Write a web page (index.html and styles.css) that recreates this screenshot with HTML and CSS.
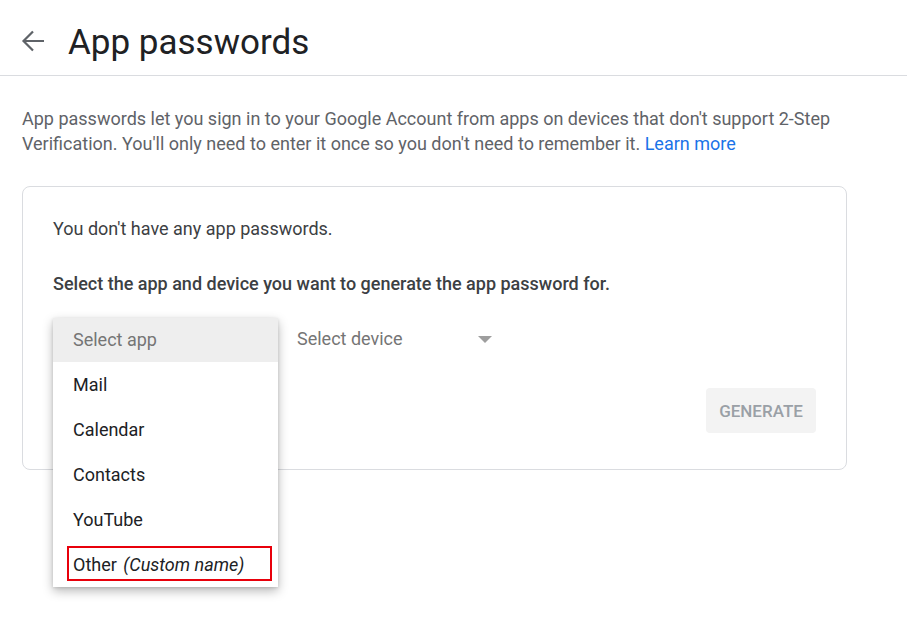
FILE: index.html
```html
<!DOCTYPE html>
<html>

<head>
    <title>App passwords</title>
    <link rel="stylesheet" href="styles.css">
</head>

<body>
    <div class="header">
        <svg class="back" width="26" height="26" viewBox="0 0 26 26">
            <path d="M24 13H3.5M13 3.5L3.5 13l9.5 9.5" fill="none" stroke="#5f6368" stroke-width="2.2"/>
        </svg>
        <h1 class="title">App passwords</h1>
    </div>

    <div class="content">
        <p class="intro">
            App passwords let you sign in to your Google Account from apps on devices that don't support 2-Step
            Verification. You'll only need to enter it once so you don't need to remember it. <a href="#">Learn more</a>
        </p>

        <div class="card">
            <p class="empty">You don't have any app passwords.</p>
            <p class="hint">Select the app and device you want to generate the app password for.</p>

            <div class="selects">
                <div class="select select-app">
                    <!-- open dropdown covers the field -->
                    <ul class="menu">
                        <li class="menu-head">Select app</li>
                        <li>Mail</li>
                        <li>Calendar</li>
                        <li>Contacts</li>
                        <li>YouTube</li>
                        <li class="other">Other <i>(Custom name)</i><span class="mark"></span></li>
                    </ul>
                </div>
                <div class="select select-device">
                    <span>Select device</span>
                    <span class="caret"></span>
                </div>
            </div>

            <div class="actions">
                <button class="generate" disabled>GENERATE</button>
            </div>
        </div>
    </div>
</body>

</html>
```

FILE: styles.css
```css
html,
body {
    min-height: 625px;
}

body {
    margin: 0;
    font-family: Roboto, "Liberation Sans", sans-serif;
    background: #fff;
    color: #3c4043;
}

.header {
    display: flex;
    align-items: center;
    height: 65px;
    padding: 10px 0 0 20px;
    border-bottom: 1px solid #dadce0;
}

.back {
    display: block;
    margin: -4px 22px 0 0;
}

.title {
    margin: 0;
    font-size: 35px;
    font-weight: 400;
    color: #202124;
}

.content {
    max-width: 825px;
    padding: 0 22px;
}

.intro {
    margin: 30px 0 30px;
    font-size: 18px;
    line-height: 25px;
    color: #5f6368;
}

.intro a {
    color: #1a73e8;
    text-decoration: none;
}

.card {
    border: 1px solid #dadce0;
    border-radius: 8px;
    padding: 30px 30px 36px;
}

.card p {
    margin: 0;
    font-size: 18px;
    line-height: 24px;
}

.empty {
    color: #3c4043;
}

.card .hint {
    margin-top: 31px;
    font-weight: 500;
    color: #3c4043;
}

.selects {
    display: flex;
    gap: 19px;
    margin-top: 22px;
}

.select {
    position: relative;
    display: flex;
    align-items: center;
    height: 41px;
    padding-bottom: 3px;
    font-size: 18px;
    color: #757575;
}

.select-app {
    width: 225px;
}

.select-device {
    width: 205px;
    justify-content: space-between;
}

.caret {
    width: 0;
    height: 0;
    margin: 2px 10px 0 0;
    border-left: 7px solid transparent;
    border-right: 7px solid transparent;
    border-top: 7px solid #9e9e9e;
}

.menu {
    position: absolute;
    top: 0;
    left: 0;
    width: 225px;
    margin: 0;
    padding: 0;
    list-style: none;
    background: #fff;
    box-shadow: 0 4px 10px rgba(0, 0, 0, 0.28), 0 1px 3px rgba(0, 0, 0, 0.12);
    z-index: 2;
}

.menu li {
    position: relative;
    height: 45px;
    line-height: 45px;
    padding-left: 20px;
    color: #202124;
}

.menu .menu-head {
    height: 44px;
    line-height: 44px;
    background: #eeeeee;
    color: #757575;
}

.menu i {
    margin-left: 2px;
}

.mark {
    position: absolute;
    top: 4px;
    left: 14px;
    right: 6px;
    bottom: 6px;
    border: 2px solid #e8000b;
}

.actions {
    display: flex;
    justify-content: flex-end;
    margin-top: 26px;
}

.generate {
    width: 110px;
    height: 45px;
    border: none;
    border-radius: 4px;
    background: #f3f3f3;
    color: #9aa0a6;
    font-family: Roboto, "Liberation Sans", sans-serif;
    font-size: 17px;
    font-weight: 500;
}
```
